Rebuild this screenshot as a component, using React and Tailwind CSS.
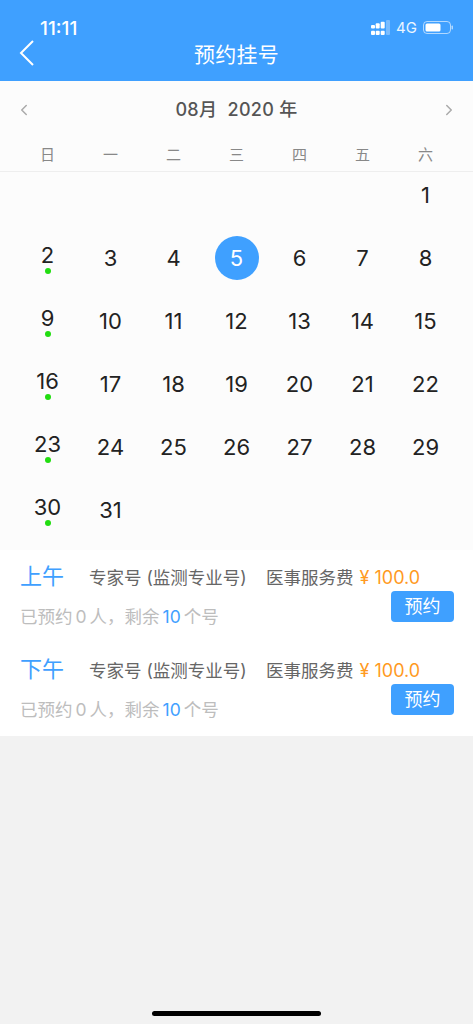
import { ChevronLeft, ChevronRight } from "lucide-react";

const FONT = "font-['Inter','Noto_Sans_CJK_SC',sans-serif]";
const WEEK = ["日", "一", "二", "三", "四", "五", "六"];
// 2020 年 8 月从周六开始
const DAYS = [...Array(6).fill(null), ...Array.from({ length: 31 }, (_, i) => i + 1)];
const MARKED = [2, 9, 16, 23, 30];

function StatusIcons() {
  return (
    <div className="mb-[4px] flex items-center">
      <svg width="19" height="15" viewBox="0 0 19 15" className="fill-white">
        <rect x="0" y="5" width="4" height="3.500" rx="1" />
        <rect x="0" y="10.700" width="4" height="4.300" rx="1" />
        <rect x="4.700" y="3.300" width="4" height="5.200" rx="1" />
        <rect x="4.700" y="10.700" width="4" height="4.300" rx="1" />
        <rect x="9.700" y="1.700" width="4" height="6.800" rx="1" />
        <rect x="9.700" y="10.700" width="4" height="4.300" rx="1" />
        <rect x="15" y="0" width="4" height="15" rx="1" fillOpacity="0.3" />
      </svg>
      <span className="ml-[6px] text-[15px] leading-none text-white/90">4G</span>
      <svg width="30" height="13" viewBox="0 0 30 13" className="ml-[6px]">
        <rect x="0.500" y="0.500" width="27" height="12" rx="3.500" fill="none" stroke="#fff" strokeOpacity="0.6" />
        <rect x="2.500" y="2.500" width="15" height="8" rx="1.500" fill="#fff" />
        <rect x="28.500" y="4.500" width="1.500" height="4" rx="0.700" fill="#fff" fillOpacity="0.6" />
      </svg>
    </div>
  );
}

function Slot({ name }) {
  return (
    <div className="h-[93px] pt-[10px]">
      <div className="flex h-[31px] items-center pl-5">
        <span className="w-[69px] text-[22px] leading-none text-[#3fa0ff]">{name}</span>
        <span className="mt-[5px] w-[177px] text-[17.5px] leading-none text-[#666]">专家号 (监测专业号)</span>
        <span className="mt-[5px] text-[17.5px] leading-none text-[#666]">医事服务费</span>
        <span className="ml-[6px] mt-[5px] text-[18px] leading-none text-[#ff9a1f]">¥ 100.0</span>
      </div>
      <div className="flex items-start justify-between pl-5 pr-[19px]">
        <span className="mt-[14px] flex text-[17.5px] leading-[24px] text-[#bdbdbd]">
          已预约<span className="mx-[3px]">0</span>人，剩余
          <span className="mx-[3px] text-[#3fa0ff]">10</span>个号
        </span>
        <button className="h-[31px] w-[63px] rounded bg-[#3fa0ff] text-[18px] text-white">预约</button>
      </div>
    </div>
  );
}

export default function App() {
  return (
    <div className={`relative h-[1024px] w-[473px] overflow-hidden bg-[#f2f2f2] ${FONT}`}>
      <header className="h-[81px] bg-[#3fa0ff] text-white">
        <div className="flex h-[39px] items-end justify-between pl-10 pr-5">
          <span className="text-[19px] font-medium leading-[20px]">11:11</span>
          <StatusIcons />
        </div>
        <div className="relative flex h-[30px] items-center justify-center">
          <svg width="15" height="26" viewBox="0 0 15 26" className="absolute left-[18.500px] top-[1px]" fill="none" stroke="#fff" strokeWidth="2">
            <polyline points="14,1 2,13 14,25" />
          </svg>
          <h1 className="text-[21px] font-normal leading-none tracking-[0.3px]">预约挂号</h1>
        </div>
      </header>

      <section className="h-[469px] bg-[#fcfcfc]">
        <div className="flex h-[56px] items-center justify-between px-[15px] pt-[1px]">
          <ChevronLeft className="h-[18px] w-[18px] text-[#aaa]" strokeWidth={2} />
          <span className="text-[18px] font-medium leading-none tracking-[0.3px] text-[#555]">08月&nbsp; 2020 年</span>
          <ChevronRight className="h-[18px] w-[18px] text-[#aaa]" strokeWidth={2} />
        </div>
        <div className="grid h-[35px] grid-cols-7 items-center border-b border-[#eee] px-4">
          {WEEK.map((d) => (
            <span key={d} className="text-center text-[15px] leading-none text-[#888]">{d}</span>
          ))}
        </div>
        <div className="grid grid-cols-7 gap-y-[19px] px-4 pt-[1px]">
          {DAYS.map((d, i) => (
            <div key={i} className="relative flex h-11 items-center justify-center">
              {d === 5 && (
                <span className="flex h-11 w-11 items-center justify-center rounded-full bg-[#3fa0ff] text-[22px] text-white">5</span>
              )}
              {d && d !== 5 && (
                <span className={`text-[22px] leading-none text-[#222] ${MARKED.includes(d) ? "-mt-[7px]" : ""}`}>{d}</span>
              )}
              {MARKED.includes(d) && (
                <span className="absolute left-1/2 top-[32px] h-[6px] w-[6px] -translate-x-1/2 rounded-full bg-[#22dd11]" />
              )}
            </div>
          ))}
        </div>
      </section>

      <section className="h-[186px] bg-white">
        <Slot name="上午" />
        <Slot name="下午" />
      </section>

      <div className="absolute bottom-[8px] left-[152px] h-[5px] w-[169px] rounded-full bg-black" />
    </div>
  );
}
